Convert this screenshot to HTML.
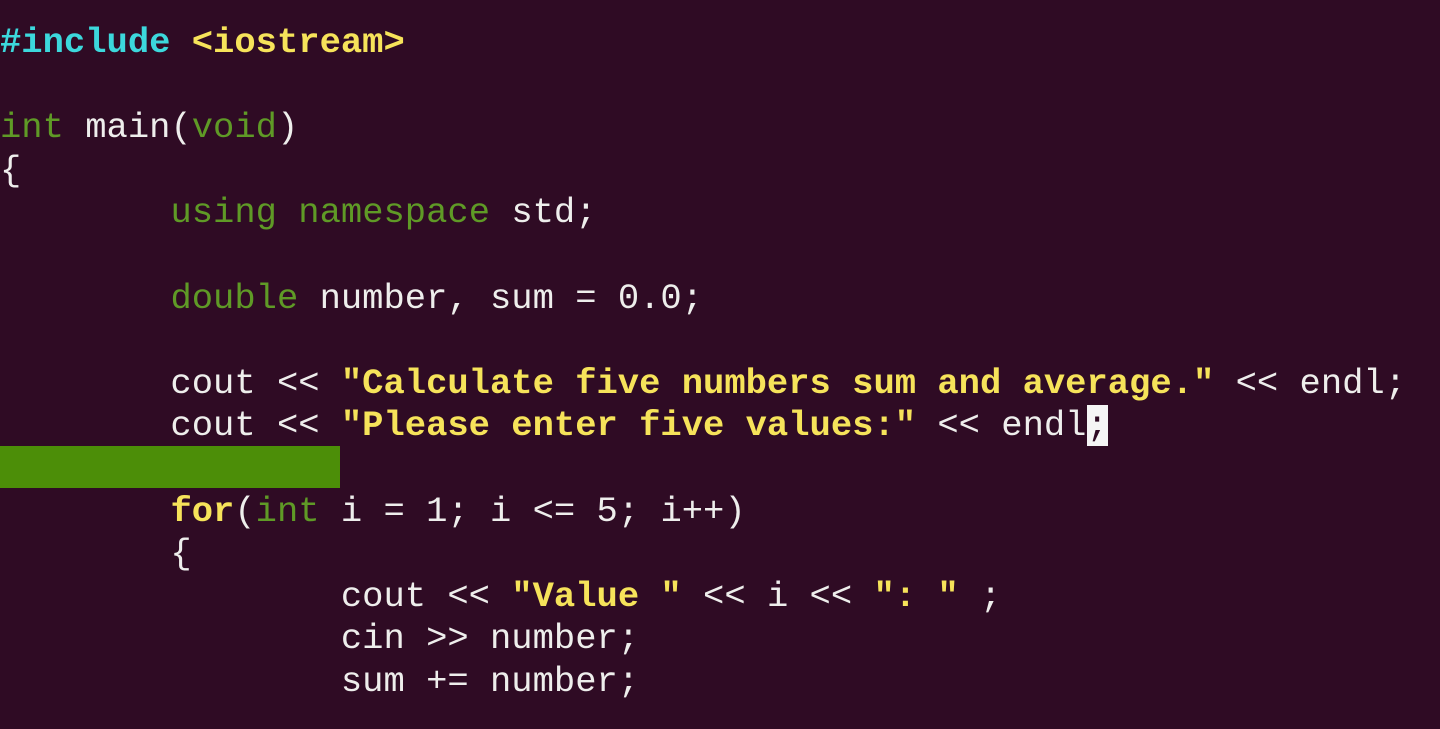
<!DOCTYPE html>
<html><head><meta charset="utf-8"><style>
html,body{margin:0;padding:0;width:1440px;height:729px;overflow:hidden;background:#2f0b24;}
.t{position:absolute;left:0;top:22px;font-family:"Liberation Mono","DejaVu Sans Mono",monospace;font-size:35.5px;line-height:42.6px;color:#eeeeec;white-space:pre;}
.k{color:#5f9a26}.s{color:#f6e35a;font-weight:bold}.c{color:#3cd8dc;font-weight:bold}.y{color:#f6e35a;font-weight:bold}
.cur{background:#f5f5f5;color:#2f0b24}
.bar{position:absolute;left:0;top:446px;width:340px;height:42px;background:#4c8e08}
</style></head><body>
<div class="bar"></div>
<div class="t"><span class="c">#include</span> <span class="y">&lt;iostream&gt;</span>

<span class="k">int</span> main(<span class="k">void</span>)
{
        <span class="k">using</span> <span class="k">namespace</span> std;

        <span class="k">double</span> number, sum = 0.0;

        cout &lt;&lt; <span class="s">"Calculate five numbers sum and average."</span> &lt;&lt; endl;
        cout &lt;&lt; <span class="s">"Please enter five values:"</span> &lt;&lt; endl<span class="cur">;</span>

        <span class="y">for</span>(<span class="k">int</span> i = 1; i &lt;= 5; i++)
        {
                cout &lt;&lt; <span class="s">"Value "</span> &lt;&lt; i &lt;&lt; <span class="s">": "</span> ;
                cin &gt;&gt; number;
                sum += number;
</div>
</body></html>
